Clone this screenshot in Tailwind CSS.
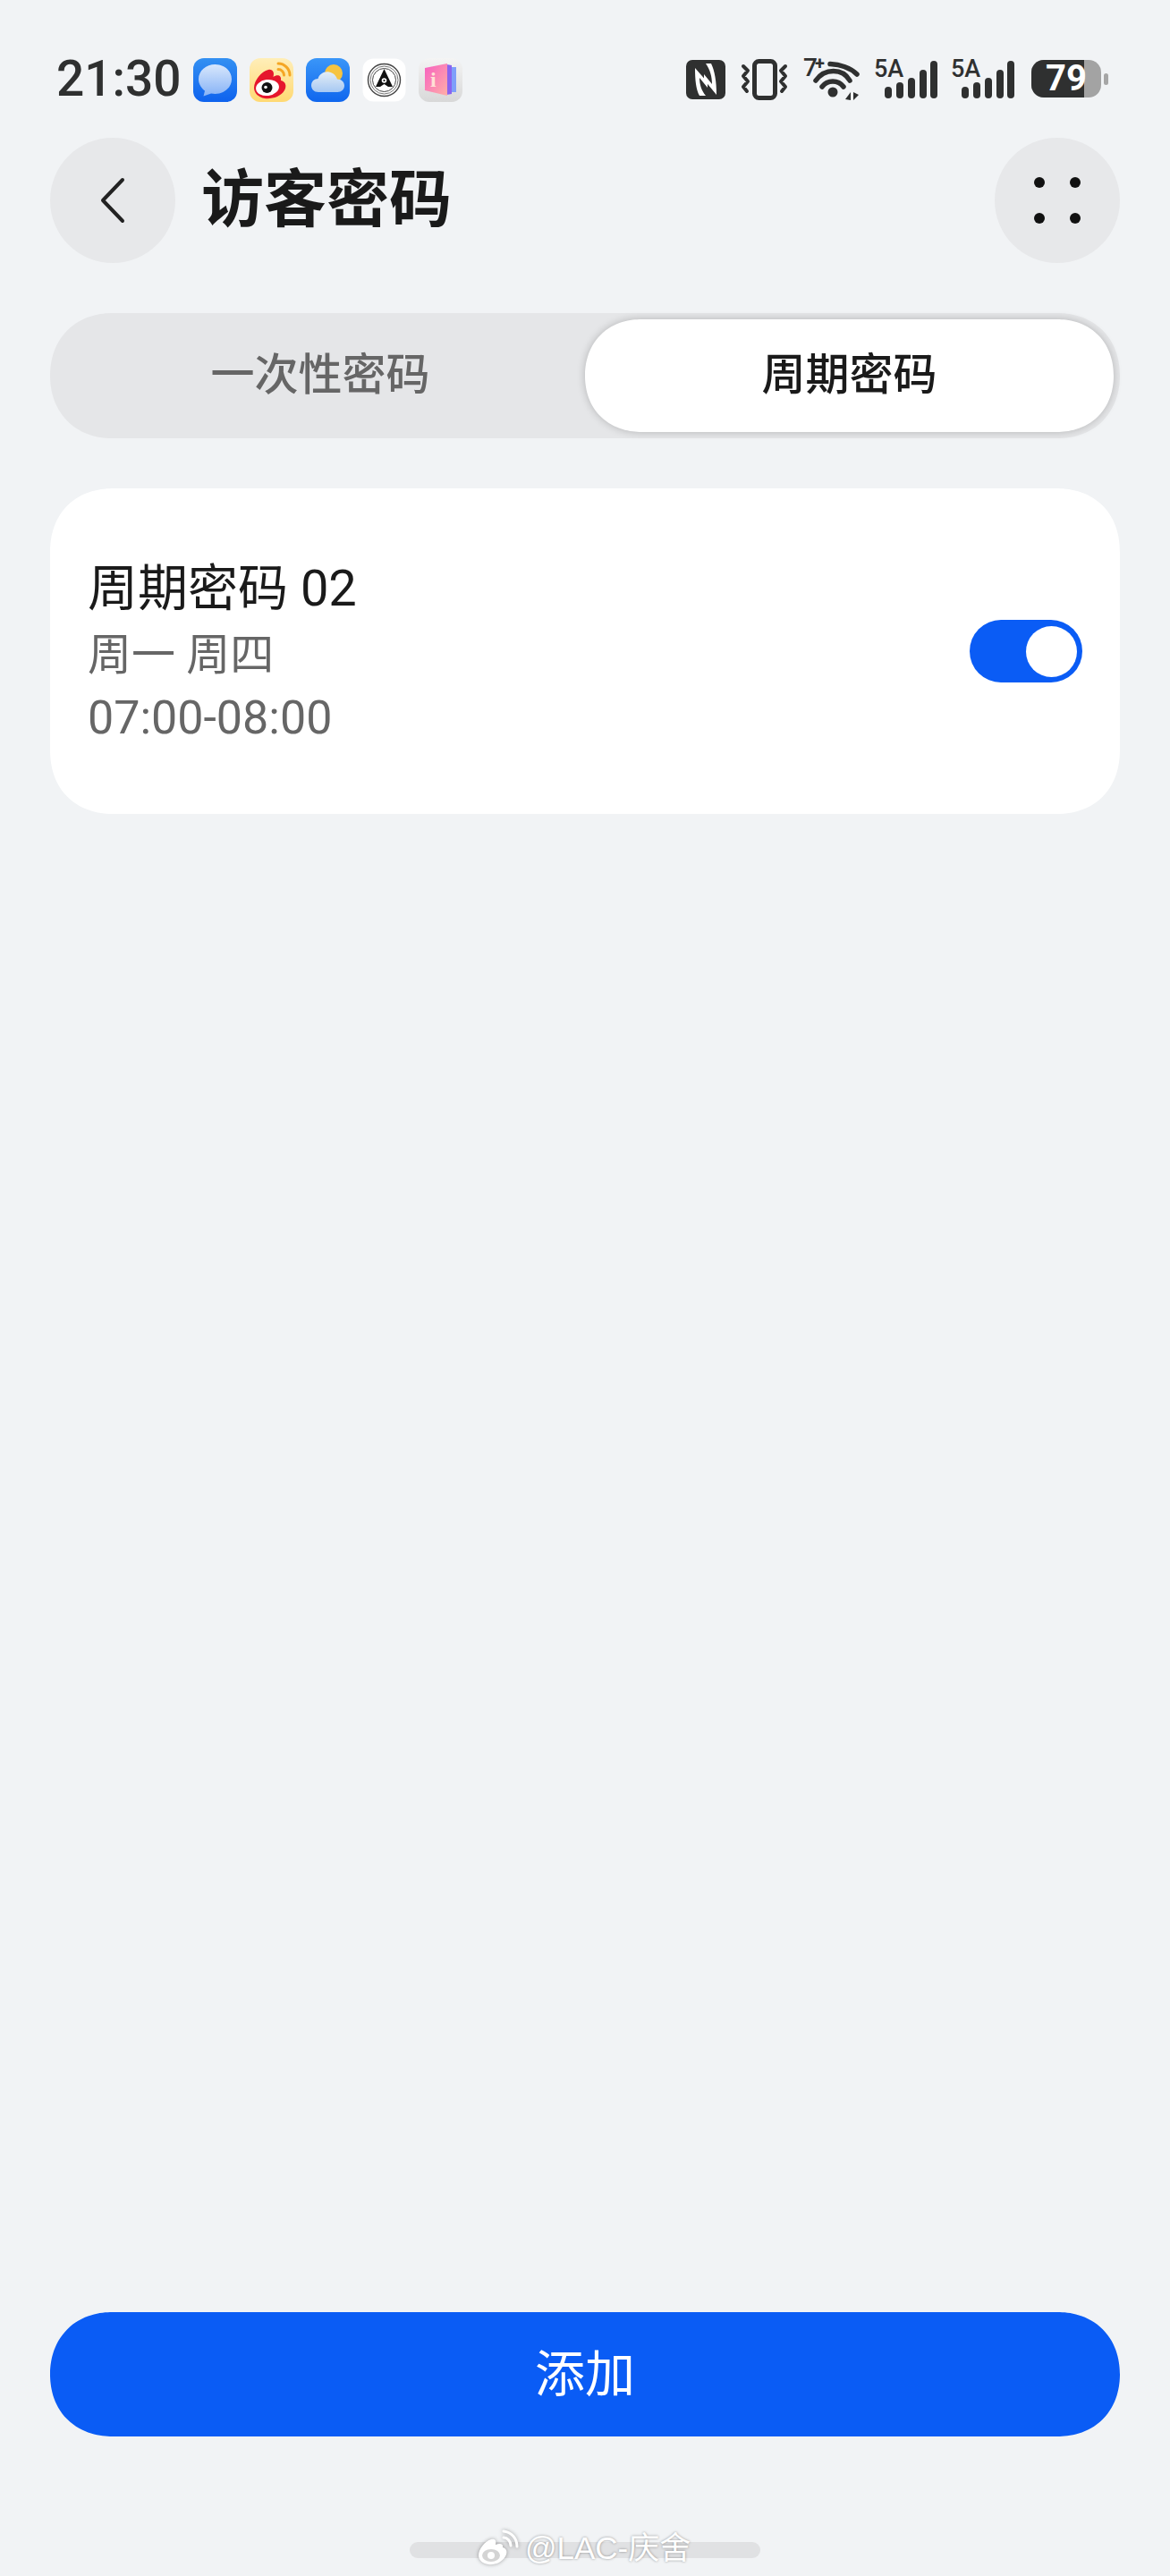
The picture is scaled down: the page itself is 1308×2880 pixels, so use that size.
<!DOCTYPE html>
<html lang="zh-CN">
<head>
  <meta charset="UTF-8">
  <title>访客密码</title>
  <meta name="viewport" content="width=device-width, initial-scale=1.0">
  <script src="https://cdn.jsdelivr.net/npm/@tailwindcss/browser@4"></script>
</head>
<body class="bg-[#f1f3f5] font-['Roboto','Noto_Sans_CJK_SC',sans-serif]">
  <div class="relative flex h-[2880px] w-[1308px] flex-col overflow-hidden">

    <!-- status bar -->
    <div class="flex h-[154px] items-start pt-[65px]">
      <span class="ml-[63px] w-[153px] text-[55px] leading-[46px] font-medium text-[#2f3030]">21:30</span>
      <div class="flex gap-[14px]">
        <svg width="49" height="49" viewBox="0 0 49 49">
          <defs>
            <linearGradient id="msgBg" x1="0" y1="0" x2="0" y2="1"><stop offset="0" stop-color="#3390f2"/><stop offset="1" stop-color="#0e62ee"/></linearGradient>
            <linearGradient id="msgBub" x1="0" y1="0" x2="0" y2="1"><stop offset="0" stop-color="#d8e7fc"/><stop offset="1" stop-color="#86b2f6"/></linearGradient>
          </defs>
          <rect width="49" height="49" rx="12" fill="url(#msgBg)"/>
          <path d="M24.500 7C14.500 7 6 14 6 23.500C6 29.500 9.500 34 13 36.500L11.500 42.500L20 39.500C21.500 39.800 23 40 24.500 40C34.500 40 43 33 43 23.500C43 14 34.500 7 24.500 7Z" fill="url(#msgBub)"/>
        </svg>
        <svg width="49" height="49" viewBox="0 0 49 49">
          <defs>
            <linearGradient id="wbBg" x1="0" y1="0" x2="0" y2="1"><stop offset="0" stop-color="#ffeeb8"/><stop offset="1" stop-color="#ffd973"/></linearGradient>
          </defs>
          <rect width="49" height="49" rx="12" fill="url(#wbBg)"/>
          <path d="M5 33C5 25 13 15 21 13C26 12 28 16 26.500 21C31 18 36 19 35 25C40 26 42 31 39 36C35 43 25 46 17 45C10 44 5 39 5 33Z" fill="#e6162d"/>
          <ellipse cx="20" cy="33" rx="13" ry="9" fill="#fff" transform="rotate(-8 20 33)"/>
          <circle cx="19.500" cy="33" r="6" fill="#111"/>
          <circle cx="18" cy="32.500" r="1.800" fill="#fff"/>
          <path d="M32 6C39 6 45 12 45 19M32 12.500C35.500 12.500 38.500 15.500 38.500 19" fill="none" stroke="#f5a623" stroke-width="3" stroke-linecap="round"/>
        </svg>
        <svg width="49" height="49" viewBox="0 0 49 49">
          <defs>
            <linearGradient id="wxBg" x1="0" y1="0" x2="0" y2="1"><stop offset="0" stop-color="#3a96f8"/><stop offset="1" stop-color="#0f66ee"/></linearGradient>
            <linearGradient id="wxCl" x1="0" y1="0" x2="0" y2="1"><stop offset="0" stop-color="#e3edf6"/><stop offset="1" stop-color="#a6c8f3"/></linearGradient>
          </defs>
          <rect width="49" height="49" rx="12" fill="url(#wxBg)"/>
          <circle cx="31" cy="17" r="10" fill="#f6c440"/>
          <path d="M14 38C9 38 6 34.500 6 30.500C6 26 9.500 23 13.500 23C15 18 20 14.500 26 15.500C31 16.500 34 20 35 23.500C40 23.500 43 27 43 30.800C43 35 39.500 38 35.500 38Z" fill="url(#wxCl)"/>
        </svg>
        <svg width="49" height="49" viewBox="0 0 49 49">
          <rect x="0.500" y="0.500" width="48" height="48" rx="12" fill="#fff"/>
          <circle cx="24.500" cy="24.500" r="18" fill="none" stroke="#444" stroke-width="1.400"/>
          <circle cx="24.500" cy="24.500" r="15.500" fill="none" stroke="#777" stroke-width="1"/>
          <circle cx="24.500" cy="24.500" r="13" fill="none" stroke="#444" stroke-width="1"/>
          <path d="M24.500 12L34 32H29L24.500 29L20 32H15Z" fill="#111"/>
          <circle cx="24.500" cy="25" r="2.800" fill="#fff"/>
          <circle cx="24.500" cy="25" r="1.100" fill="#111"/>
        </svg>
        <svg class="overflow-visible" width="49" height="49" viewBox="0 0 49 49">
          <defs>
            <linearGradient id="bkBg" x1="0" y1="0" x2="0" y2="1"><stop offset="0" stop-color="#f4f4f4"/><stop offset="1" stop-color="#d8d8d8"/></linearGradient>
            <linearGradient id="bkPg" x1="0" y1="0" x2="1" y2="1"><stop offset="0" stop-color="#f75fc0"/><stop offset="1" stop-color="#ffb0a8"/></linearGradient>
          </defs>
          <rect width="49" height="49" rx="12" fill="url(#bkBg)"/>
          <rect x="37" y="10" width="5" height="28" fill="#7f9ffa"/>
          <path d="M31 7L37 8V40L31 41Z" fill="#8a63ee"/>
          <path d="M7 11L32 6V42L7 36Z" fill="url(#bkPg)"/>
          <text x="13" y="32" font-family="Liberation Serif" font-size="24" font-weight="700" fill="#ffe1d6">i</text>
        </svg>
      </div>

      <div class="mr-[69px] ml-auto flex items-start">
        <!-- nfc -->
        <svg class="mt-[2px]" width="44" height="44" viewBox="0 0 44 44">
          <rect width="44" height="44" rx="7" fill="#2f3030"/>
          <path d="M10 9L24 25V31L15 20C15 27 17 34 22 40H15C11 33 10 22 10 9Z" fill="#fff"/>
          <path d="M34 39L20 22V16L29 27C29 19 27 11 22 4H28C32 12 34 24 34 39Z" fill="#fff"/>
        </svg>
        <!-- vibrate -->
        <svg class="mt-[1px] ml-[17px]" width="53" height="46" viewBox="0 0 53 46">
          <rect x="15.500" y="2.500" width="23" height="41" rx="5" fill="none" stroke="#2f3030" stroke-width="5"/>
          <path d="M3 8L8 13L3 19L8 25L3 31L7 36M50 8L45 13L50 19L45 25L50 31L46 36" fill="none" stroke="#2f3030" stroke-width="4" stroke-linecap="round" stroke-linejoin="round"/>
        </svg>
        <!-- wifi -->
        <svg class="ml-[17px] overflow-visible" width="64" height="48" viewBox="0 0 64 48">
          <text x="0" y="20" font-family="Roboto" font-size="28" font-weight="500" fill="#2f3030">7</text>
          <text x="13" y="13" font-family="Roboto" font-size="20" font-weight="700" fill="#2f3030">+</text>
          <path d="M30 6.500C41 7 53 11 60 18M14 25C24 11 44 11 52 25M21 32C27 24 39 24 45 32" fill="none" stroke="#2f3030" stroke-width="5.500" stroke-linecap="round"/>
          <circle cx="33" cy="38" r="5.500" fill="#2f3030"/>
          <path d="M47 46L53 38V47ZM56 38V47L62 41Z" fill="#2f3030"/>
        </svg>
        <!-- signal x2 -->
        <svg class="ml-[15px] overflow-visible" width="72" height="46" viewBox="0 0 72 46">
          <text x="0" y="21" font-family="Roboto" font-size="27" font-weight="500" fill="#2f3030">5A</text>
          <rect x="12" y="32" width="8" height="13" rx="4" fill="#2f3030"/>
          <rect x="25" y="27" width="8" height="18" rx="4" fill="#2f3030"/>
          <rect x="38" y="22" width="8" height="23" rx="4" fill="#2f3030"/>
          <rect x="51" y="13" width="8" height="32" rx="4" fill="#2f3030"/>
          <rect x="63" y="3" width="8" height="42" rx="4" fill="#2f3030"/>
        </svg>
        <svg class="ml-[14px] overflow-visible" width="72" height="46" viewBox="0 0 72 46">
          <text x="0" y="21" font-family="Roboto" font-size="27" font-weight="500" fill="#2f3030">5A</text>
          <rect x="12" y="32" width="8" height="13" rx="4" fill="#2f3030"/>
          <rect x="25" y="27" width="8" height="18" rx="4" fill="#2f3030"/>
          <rect x="38" y="22" width="8" height="23" rx="4" fill="#2f3030"/>
          <rect x="51" y="13" width="8" height="32" rx="4" fill="#2f3030"/>
          <rect x="63" y="3" width="8" height="42" rx="4" fill="#2f3030"/>
        </svg>
        <!-- battery -->
        <div class="relative mt-[2px] ml-[18px] h-[42px] w-[78px]">
          <div class="h-full w-full overflow-hidden rounded-[14px] bg-[#a3a3a3]">
            <div class="h-full w-[59px] bg-[#2f3030]"></div>
          </div>
          <span class="absolute top-0 left-[16px] text-[40px] leading-[42px] font-bold text-white">79</span>
        </div>
        <div class="mt-[17px] ml-[3px] h-[13px] w-[5px] rounded-full bg-[#a6a6a6]"></div>
      </div>
    </div>

    <!-- header -->
    <div class="flex h-[140px] items-center px-[56px]">
      <button class="flex h-[140px] w-[140px] items-center justify-center rounded-full bg-[#e7e8ea]">
        <svg width="30" height="52" viewBox="0 0 30 52">
          <path d="M26 3L4 26L26 49" fill="none" stroke="#222" stroke-width="4" stroke-linecap="round" stroke-linejoin="round"/>
        </svg>
      </button>
      <h1 class="ml-[29px] text-[70px] leading-[80px] font-bold text-[#1a1a1a]">访客密码</h1>
      <button class="ml-auto grid h-[140px] w-[140px] grid-cols-[12px_12px] content-center justify-center gap-x-[28px] gap-y-[28px] rounded-full bg-[#e7e8ea]">
        <span class="h-[12px] w-[12px] rounded-full bg-[#111]"></span>
        <span class="h-[12px] w-[12px] rounded-full bg-[#111]"></span>
        <span class="h-[12px] w-[12px] rounded-full bg-[#111]"></span>
        <span class="h-[12px] w-[12px] rounded-full bg-[#111]"></span>
      </button>
    </div>

    <!-- tabs -->
    <div class="mx-[56px] mt-[56px] flex h-[140px] rounded-[70px] bg-[#e5e6e8] p-[7px_6px] [corner-shape:superellipse(1.1)]">
      <div class="flex w-[592px] items-center justify-center text-[49px] font-medium text-[#666]">一次性密码</div>
      <div class="flex w-[591px] items-center justify-center rounded-[63px] bg-white text-[49px] font-medium text-[#1a1a1a] shadow-[0_0_10px_rgba(0,0,0,0.22)] [corner-shape:superellipse(1.1)]">周期密码</div>
    </div>

    <!-- card -->
    <div class="mx-[56px] mt-[56px] flex h-[364px] items-center justify-between rounded-[72px] bg-white pr-[42px] pl-[42px] [corner-shape:superellipse(1.15)]">
      <div class="mt-[4px] flex flex-col">
        <span class="text-[56px] leading-[72px] text-[#1a1a1a]">周期密码 02</span>
        <span class="mt-[4px] text-[49px] leading-[70px] text-[#666]">周一 周四</span>
        <span class="text-[52px] leading-[70px] text-[#666]">07:00-08:00</span>
      </div>
      <div class="flex h-[70px] w-[126px] items-center justify-end rounded-full bg-[#0a5cf5] pr-[6px]">
        <span class="h-[57px] w-[57px] rounded-full bg-white"></span>
      </div>
    </div>

    <!-- add button -->
    <button class="mx-[56px] mt-auto h-[139px] rounded-[70px] bg-[#0a5cf5] text-[56px] text-white [corner-shape:superellipse(1.1)]">添加</button>

    <!-- home bar -->
    <div class="mt-[118px] mb-[20px] h-[18px] w-[392px] self-center rounded-full bg-[#e0e1e3]"></div>

    <!-- watermark over the home bar -->
    <div class="absolute top-[2828px] left-[534px] flex items-center font-['Liberation_Sans','Noto_Sans_CJK_SC',sans-serif] text-[35px] leading-[42px] text-white [text-shadow:0_0_3px_rgba(0,0,0,0.4)]">
      <svg class="drop-shadow-[0_0_2px_rgba(0,0,0,0.35)]" width="48" height="42" viewBox="0 0 48 42">
        <path d="M1 29C1 22 8 13 15 11C20 10 21 13 20 17C25 15 29 16 28 20C32 21 34 25 31 30C27 37 19 40 12 39C5 38 1 34 1 29Z" fill="#fff"/>
        <ellipse cx="15" cy="29" rx="10" ry="7" fill="#d4d4d4"/>
        <circle cx="15" cy="29" r="4" fill="#fff"/>
        <path d="M29 2C38 3 44 10 44 19M29 9C33 9 37 13 37 18" fill="none" stroke="#fff" stroke-width="3" stroke-linecap="round"/>
      </svg>
      <span class="ml-[5px]">@LAC-庆舍</span>
    </div>
  </div>
</body>
</html>
